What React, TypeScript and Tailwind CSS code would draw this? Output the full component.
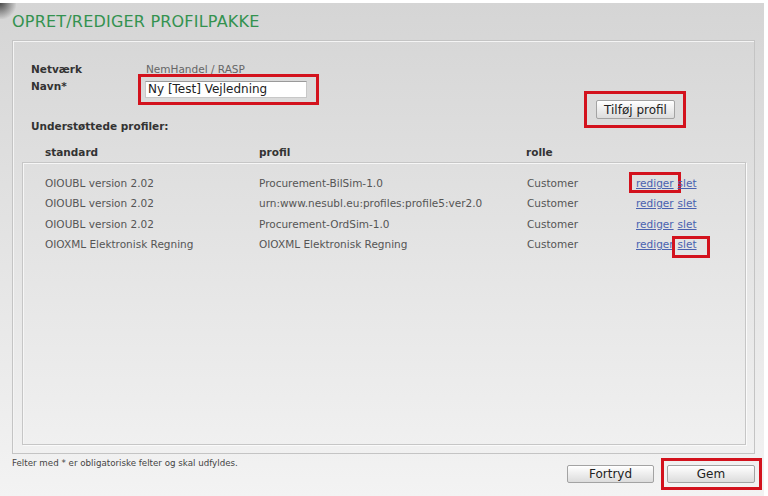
import React from 'react';

const rows = [
  { standard: 'OIOUBL version 2.02', profil: 'Procurement-BilSim-1.0', rolle: 'Customer' },
  { standard: 'OIOUBL version 2.02', profil: 'urn:www.nesubl.eu:profiles:profile5:ver2.0', rolle: 'Customer' },
  { standard: 'OIOUBL version 2.02', profil: 'Procurement-OrdSim-1.0', rolle: 'Customer' },
  { standard: 'OIOXML Elektronisk Regning', profil: 'OIOXML Elektronisk Regning', rolle: 'Customer' },
];

const btn =
  'block border border-[#a3a3a3] rounded-[2px] bg-gradient-to-b from-white to-[#dcdcdc] text-[12px] text-[#222] leading-none shadow-[inset_0_1px_0_#fff]';

const App: React.FC = () => {
  return (
    <div className="relative w-[768px] h-[496px] bg-white font-['DejaVu_Sans',Verdana,sans-serif] overflow-hidden">
      <div className="mt-[3px] w-[764px] h-[493px] bg-gradient-to-b from-[#d5d5d5] via-[#e4e4e4] to-[#f3f3f3] flex flex-col">
        <h1 className="pl-3 pt-[8.5px] text-[16px] leading-[20px] tracking-[0.2px] text-[#33924f]">OPRET/REDIGER PROFILPAKKE</h1>

        {/* outer box */}
        <div className="ml-3 mt-[8.5px] w-[743px] h-[414px] shrink-0 border border-[#c4c4c4] shadow-[inset_1px_1px_0_#f4f4f4] flex flex-col">
          <div className="mt-[21px] pl-[18px] flex text-[10.5px] leading-[14px]">
            <span className="w-[115px] font-bold text-[#333]">Netværk</span>
            <span className="text-[#666]">NemHandel / RASP</span>
          </div>
          <div className="mt-[3px] pl-[18px] flex items-start text-[10.5px] leading-[14px]">
            <span className="w-[114px] font-bold text-[#333]">Navn*</span>
            <div className="relative mt-[2px]">
              <div className="w-[162px] h-[17px] bg-white border border-[#c8c8c8] border-t-[#9a9a9a] pl-[2px] text-[12px] leading-[15px] text-[#222]">
                Ny [Test] Vejledning
              </div>
              <span className="absolute -left-[7px] -right-[12px] -top-[7px] -bottom-[7px] border-[3px] border-[#d3121d]" />
            </div>
          </div>
          <div className="mt-[2px] ml-[583px] relative flex w-[79px] h-[19px]">
            <button className={`${btn} w-[79px] h-[19px]`}>Tilføj profil</button>
            <span className="absolute -left-[12px] -right-[11px] -top-[9px] -bottom-[9px] border-[3px] border-[#d3121d]" />
          </div>
          <div className="pl-[18px] text-[10.5px] leading-[14px] font-bold text-[#333]">Understøttede profiler:</div>

          <div className="mt-[12px] pl-[32px] grid grid-cols-[214px_267px_1fr] text-[10.5px] leading-[14px] font-bold text-[#333]">
            <span>standard</span>
            <span>profil</span>
            <span>rolle</span>
          </div>

          {/* inner box */}
          <div className="mt-[3px] ml-[9px] w-[724px] h-[283px] shrink-0 border border-[#c6c6c6] shadow-[inset_1px_1px_0_#f6f6f6,1px_1px_0_#fafafa] pt-[10px] pl-[22px]">
            {rows.map((r, i) => (
              <div key={i} className="grid grid-cols-[214px_268px_109px_1fr] text-[10.5px] leading-[20.3px] text-[#555]">
                <span>{r.standard}</span>
                <span>{r.profil}</span>
                <span>{r.rolle}</span>
                <span className="flex gap-[4px]">
                  <span className="relative inline-block">
                    <a className="text-[#4a62b0] underline">rediger</a>
                    {i === 0 && <span className="absolute -left-[7px] -right-[7px] -top-[1px] bottom-0 border-[3px] border-[#d3121d]" />}
                  </span>
                  <span className="relative inline-block">
                    <a className="text-[#4a62b0] underline">slet</a>
                    {i === 3 && <span className="absolute -left-[6px] -right-[13px] top-[2px] -bottom-[4px] border-[3px] border-[#d3121d]" />}
                  </span>
                </span>
              </div>
            ))}
          </div>
        </div>

        {/* footer */}
        <div className="flex justify-between">
          <span className="ml-3 mt-[3px] text-[8.7px] leading-[12px] text-[#444]">Felter med * er obligatoriske felter og skal udfyldes.</span>
          <div className="mt-[11px] mr-[9px] flex items-start gap-[13px]">
            <button className={`${btn} w-[87px] h-[18px]`}>Fortryd</button>
            <div className="relative flex">
              <button className={`${btn} w-[88px] h-[18px]`}>Gem</button>
              <span className="absolute -left-[6px] -right-[7px] -top-[7px] -bottom-[7px] border-[3px] border-[#d3121d]" />
            </div>
          </div>
        </div>
      </div>
      <div className="absolute top-[3px] left-0 w-[16px] h-[16px] bg-[radial-gradient(circle_at_top_left,#4a4a4a,transparent_75%)]" />
    </div>
  );
};

export default App;
